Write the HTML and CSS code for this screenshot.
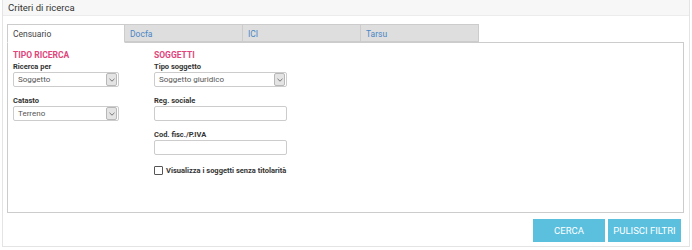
FILE: index.html
```html
<!DOCTYPE html>
<html lang="it">
<head>
    <meta charset="UTF-8">
    <title>Criteri di ricerca</title>
    <link rel="stylesheet" href="styles.css">
</head>
<body>
    <div class="panel">
        <div class="panel-heading">Criteri di ricerca</div>
        <div class="panel-body">
            <ul class="tabs">
                <li class="tab active">Censuario</li>
                <li class="tab">Docfa</li>
                <li class="tab">ICI</li>
                <li class="tab">Tarsu</li>
            </ul>
            <div class="tab-content">
                <div class="col col-left">
                    <h4 class="section-title">TIPO RICERCA</h4>
                    <label class="field-label">Ricerca per</label>
                    <div class="select">
                        <span class="select-value">Soggetto</span>
                        <span class="select-arrow"><svg width="6" height="4" viewBox="0 0 6 4"><path d="M0.5 0.8 L3 3.2 L5.5 0.8" fill="none" stroke="#777" stroke-width="1"/></svg></span>
                    </div>
                    <label class="field-label">Catasto</label>
                    <div class="select">
                        <span class="select-value">Terreno</span>
                        <span class="select-arrow"><svg width="6" height="4" viewBox="0 0 6 4"><path d="M0.5 0.8 L3 3.2 L5.5 0.8" fill="none" stroke="#777" stroke-width="1"/></svg></span>
                    </div>
                </div>
                <div class="col col-right">
                    <h4 class="section-title">SOGGETTI</h4>
                    <label class="field-label">Tipo soggetto</label>
                    <div class="select">
                        <span class="select-value">Soggetto giuridico</span>
                        <span class="select-arrow"><svg width="6" height="4" viewBox="0 0 6 4"><path d="M0.5 0.8 L3 3.2 L5.5 0.8" fill="none" stroke="#777" stroke-width="1"/></svg></span>
                    </div>
                    <label class="field-label">Reg. sociale</label>
                    <input class="input" type="text">
                    <label class="field-label">Cod. fisc./P.IVA</label>
                    <input class="input" type="text">
                    <label class="check">
                        <span class="check-box"></span>
                        Visualizza i soggetti senza titolarità
                    </label>
                </div>
            </div>
            <div class="actions">
                <button class="btn">CERCA</button>
                <button class="btn">PULISCI FILTRI</button>
            </div>
        </div>
    </div>
</body>
</html>
```

FILE: styles.css
```css
body {
    margin: 0;
    padding: 0 2px;
    background: #ffffff;
    font-family: Roboto, "Liberation Sans", sans-serif;
    color: #333333;
}

.panel {
    border: 1px solid #e4e4e4;
    border-top: none;
    height: 247px;
    box-sizing: border-box;
}

.panel-heading {
    height: 15px;
    line-height: 15px;
    padding-left: 5px;
    font-size: 9.5px;
    color: #333333;
    background: #f7f7f7;
    border-bottom: 1px solid #ececec;
}

.panel-body {
    padding: 8px 5px 0 4px;
}

.tabs {
    display: flex;
    margin: 0;
    padding: 0;
    list-style: none;
    border-bottom: 1px solid #cccccc;
    width: 677px;
}

.tab {
    width: 118px;
    height: 18px;
    line-height: 18px;
    box-sizing: border-box;
    padding-left: 5px;
    font-size: 8.5px;
    color: #4a86c5;
    background: #dedede;
    border: 1px solid #cccccc;
    border-left: none;
    margin-bottom: -1px;
}

.tab.active {
    color: #444444;
    background: #ffffff;
    border-left: 1px solid #cccccc;
    border-bottom-color: #ffffff;
    height: 19px;
}

.tab-content {
    display: flex;
    width: 677px;
    height: 170px;
    box-sizing: border-box;
    border: 1px solid #cccccc;
    border-top: none;
    padding: 7px 0 0 5px;
}

.col {
    display: flex;
    flex-direction: column;
}

.col-left {
    width: 106px;
    margin-right: 35px;
}

.col-right {
    width: 133px;
}

.section-title {
    margin: 0 0 3px;
    font-size: 8.5px;
    font-weight: bold;
    color: #e0457b;
    line-height: 10px;
}

.field-label {
    font-size: 7.5px;
    font-weight: bold;
    color: #333333;
    line-height: 8px;
    margin-bottom: 1px;
}

.select {
    display: flex;
    align-items: center;
    height: 15px;
    box-sizing: border-box;
    border: 1px solid #cccccc;
    border-radius: 2px;
    margin-bottom: 10px;
    padding: 0 1px 0 4px;
}

.select-value {
    flex: 1;
    font-size: 8px;
    color: #555555;
}

.select-arrow {
    display: flex;
    align-items: center;
    justify-content: center;
    width: 9px;
    height: 11px;
    background: #e4e4e4;
    border: 1px solid #b8b8b8;
    border-radius: 2px;
}

.input {
    height: 15px;
    box-sizing: border-box;
    border: 1px solid #cccccc;
    border-radius: 2px;
    margin: 0 0 10px;
    padding: 0;
}

.check {
    display: flex;
    align-items: center;
    gap: 3px;
    font-size: 7.5px;
    font-weight: bold;
    color: #333333;
    margin-top: 1px;
}

.check-box {
    width: 7px;
    height: 7px;
    border: 1px solid #555555;
    border-radius: 1px;
}

.actions {
    display: flex;
    justify-content: flex-end;
    gap: 3px;
    width: 674px;
    margin-top: 6px;
}

.btn {
    width: 72px;
    height: 23px;
    border: none;
    background: #5bc0de;
    color: #ffffff;
    font-family: Roboto, "Liberation Sans", sans-serif;
    font-size: 9.5px;
    padding: 0;
}

.btn:last-child {
    width: 73px;
}
```
